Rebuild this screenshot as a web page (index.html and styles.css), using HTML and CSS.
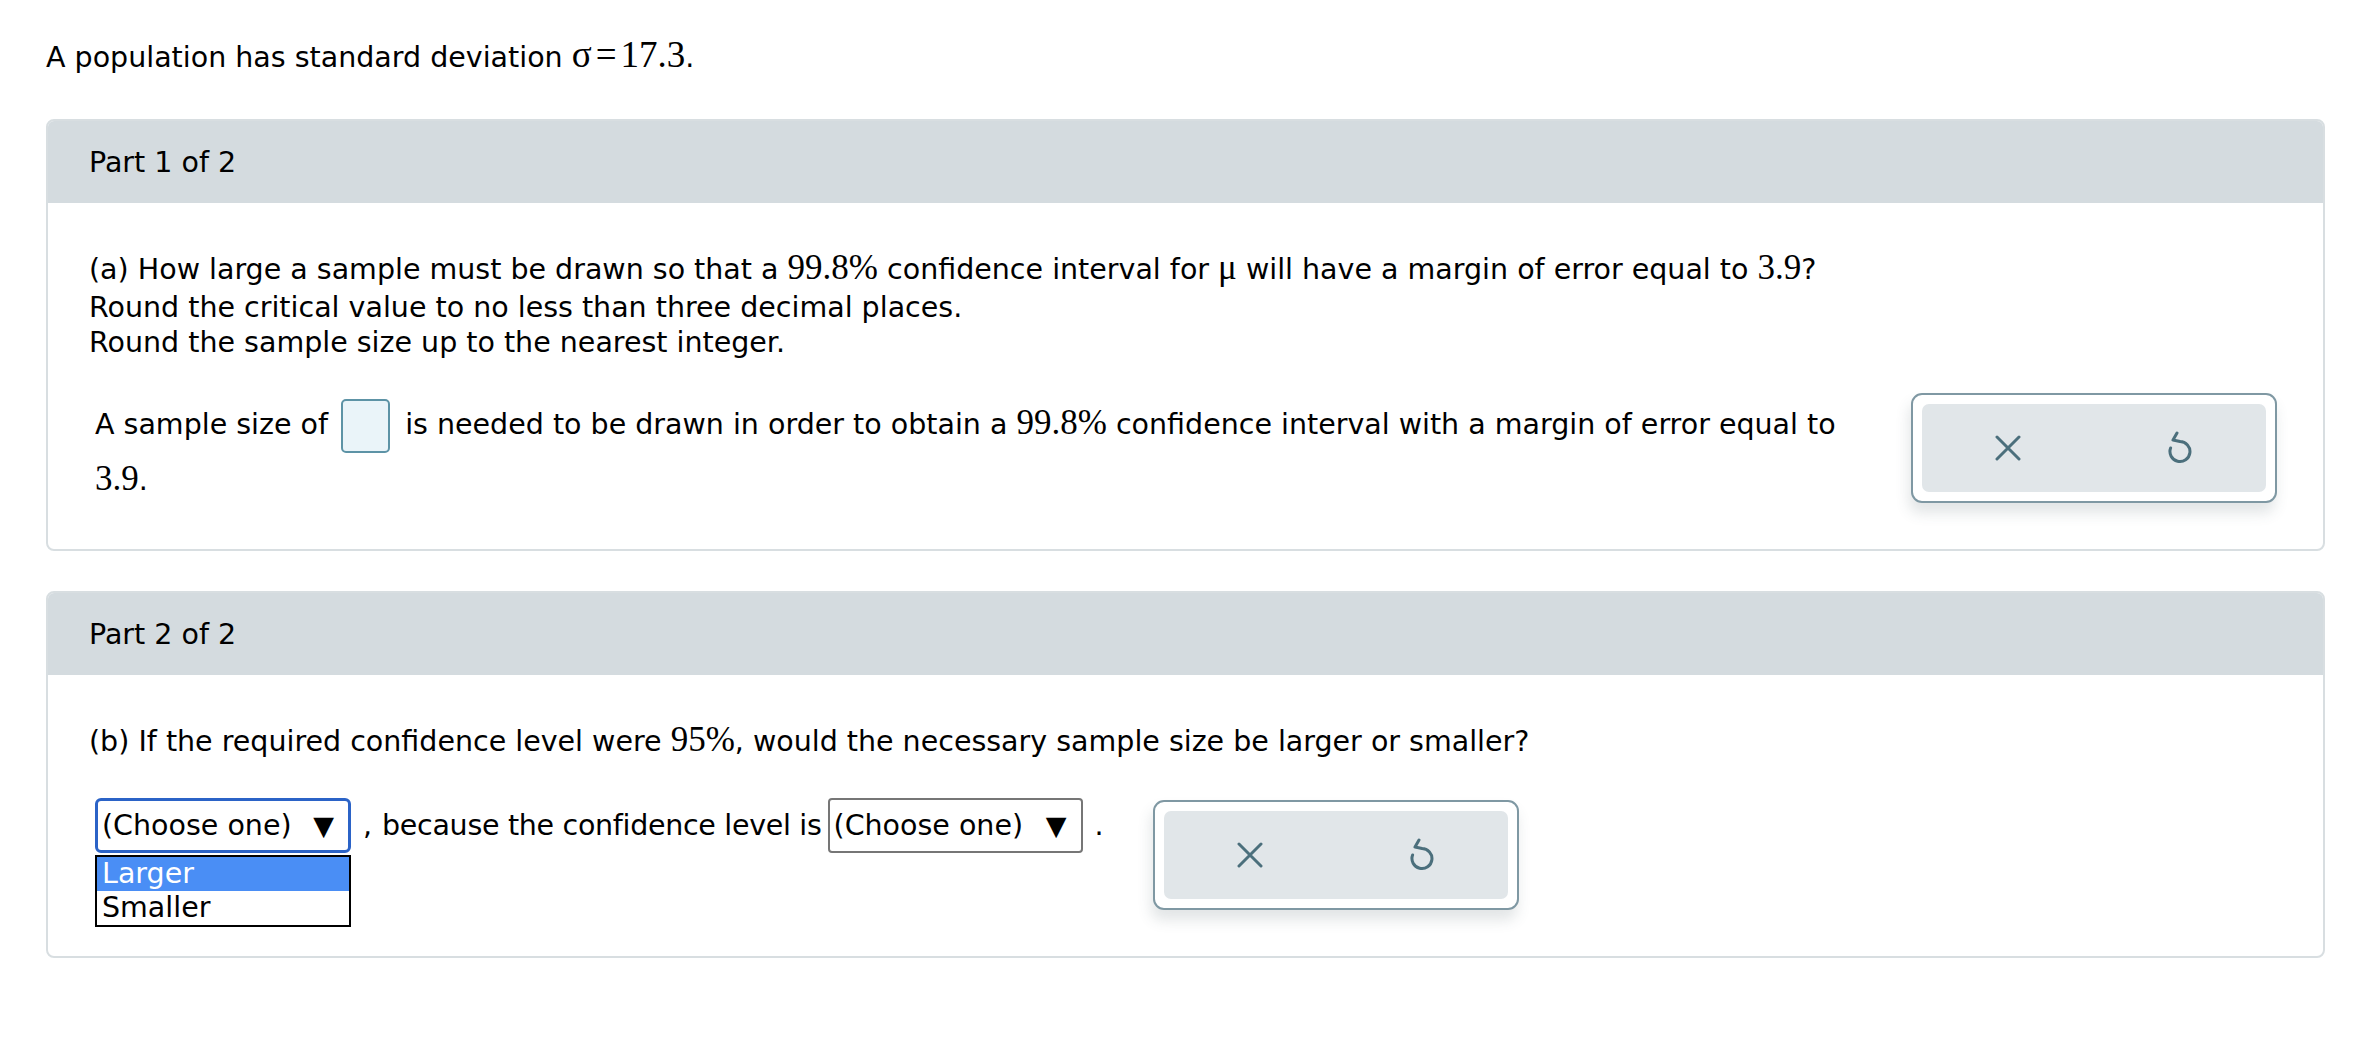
FILE: index.html
```html
<!DOCTYPE html>
<html lang="en">
<head>
<meta charset="utf-8">
<title>Sample size</title>
<link rel="stylesheet" href="styles.css">
</head>
<body>
<div class="page">
  <p class="intro">A population has standard deviation <span class="m">σ</span><span class="m eq">=</span><span class="m">17.3</span>.</p>

  <section class="card">
    <div class="card-head">Part 1 of 2</div>
    <div class="card-body">
      <div class="question">
        <p class="first">(a) How large a sample must be drawn so that a <span class="m">99.8%</span> confidence interval for <span class="m">μ</span> will have a margin of error equal to <span class="m">3.9</span>?</p>
        <p>Round the critical value to no less than three decimal places.</p>
        <p>Round the sample size up to the nearest integer.</p>
      </div>
      <div class="answer-row one">
        <p class="answer-text">A sample size of <span class="field"></span> is needed to be drawn in order to obtain a <span class="m">99.8%</span> confidence interval with a margin of error equal to <span class="m">3.9</span>.</p>
        <div class="tools">
          <div class="tools-inner">
            <button class="tool" aria-label="Clear">
              <svg width="26" height="26" viewBox="0 0 26 26"><path d="M2 2 L24 24 M24 2 L2 24" fill="none" stroke="#4b6f7c" stroke-width="3" stroke-linecap="round"/></svg>
            </button>
            <button class="tool" aria-label="Undo">
              <svg width="28" height="34" viewBox="0 0 28 34"><path d="M11 2 L7 9 L14 10.5 M14 10.5 A10 10 0 1 1 4.6 17" fill="none" stroke="#4b6f7c" stroke-width="3" stroke-linecap="round" stroke-linejoin="round"/></svg>
            </button>
          </div>
        </div>
      </div>
    </div>
  </section>

  <section class="card">
    <div class="card-head">Part 2 of 2</div>
    <div class="card-body">
      <div class="question">
        <p>(b) If the required confidence level were <span class="m">95%</span>, would the necessary sample size be larger or smaller?</p>
      </div>
      <div class="answer-row two">
        <div class="select-line">
          <div class="dd">
            <div class="select focus">(Choose one)<span class="caret">▼</span></div>
            <ul class="dd-list">
              <li class="hl">Larger</li>
              <li>Smaller</li>
            </ul>
          </div>
          <span class="comma">,</span>
          <span class="because">because the confidence level is</span>
          <div class="select plain">(Choose one)<span class="caret">▼</span></div>
          <span class="dot">.</span>
        </div>
        <div class="tools">
          <div class="tools-inner">
            <button class="tool" aria-label="Clear">
              <svg width="26" height="26" viewBox="0 0 26 26"><path d="M2 2 L24 24 M24 2 L2 24" fill="none" stroke="#4b6f7c" stroke-width="3" stroke-linecap="round"/></svg>
            </button>
            <button class="tool" aria-label="Undo">
              <svg width="28" height="34" viewBox="0 0 28 34"><path d="M11 2 L7 9 L14 10.5 M14 10.5 A10 10 0 1 1 4.6 17" fill="none" stroke="#4b6f7c" stroke-width="3" stroke-linecap="round" stroke-linejoin="round"/></svg>
            </button>
          </div>
        </div>
      </div>
    </div>
  </section>
</div>
</body>
</html>
```

FILE: styles.css
```css
* { box-sizing: border-box; }
html, body { margin: 0; padding: 0; background: #fff; }
body {
  font-family: "DejaVu Sans", Verdana, sans-serif;
  font-size: 28.5px;
  color: #000;
}
p { margin: 0; }
.page {
  padding: 39px 35px 40px 46px;
}
.intro {
  line-height: 38px;
  height: 38px;
  margin-bottom: 42px;
}
.m {
  font-family: "Liberation Serif", "Times New Roman", serif;
  font-size: 35px;
  line-height: 1;
}
.intro .m { font-size: 37px; line-height: 0; }
.eq { margin: 0 4px 0 4px; }

.card {
  border: 2px solid #d8dee1;
  border-radius: 8px;
  overflow: hidden;
  margin-bottom: 40px;
}
.card-head {
  background: #d4dbdf;
  height: 82px;
  display: flex;
  align-items: center;
  padding-left: 41px;
}
.card-body {
  padding: 47px 46px 46px 41px;
}
.question p { line-height: 35px; }
.question p.first { padding-bottom: 3px; }

.answer-row {
  display: flex;
  align-items: flex-start;
  justify-content: space-between;
}
.answer-row.one { margin-top: 33px; }
.answer-row.two { margin-top: 38px; justify-content: flex-start; }

.answer-text {
  padding-left: 6px;
  margin: 4px 0 -6px;
  line-height: 56px;
  width: 1776px;
}
.field {
  display: inline-block;
  width: 49px;
  height: 54px;
  vertical-align: middle;
  border: 2px solid #5d93a6;
  border-radius: 5px;
  background: #eaf4f9;
  margin: 0 6px 0 4px;
}

.tools {
  width: 366px;
  height: 110px;
  flex: none;
  border: 2px solid #7f98a3;
  border-radius: 11px;
  background: #fff;
  padding: 9px;
  box-shadow: -2px 10px 14px rgba(60, 80, 90, 0.15);
}
.tools-inner {
  height: 100%;
  background: #e1e6e9;
  border-radius: 7px;
  display: flex;
}
.tool {
  flex: 1;
  border: 0;
  background: transparent;
  display: flex;
  align-items: center;
  justify-content: center;
  padding: 0;
}

.select-line {
  display: flex;
  align-items: center;
  padding-left: 6px;
  white-space: nowrap;
  margin-top: 1px;
}
.dd { position: relative; }
.select {
  height: 55px;
  width: 256px;
  display: flex;
  align-items: center;
  justify-content: space-between;
  padding: 0 14px 0 4px;
  background: #fff;
}
.select.focus {
  border: 3px solid #2b63c7;
  border-radius: 6px;
}
.select.plain {
  border: 2px solid #767676;
  border-radius: 4px;
  margin-left: 6px;
  width: 255px;
  padding-left: 4px;
}
.because { letter-spacing: -0.3px; }
.caret { font-size: 27px; }
.comma { margin: 0 10px 0 12px; }
.dot { margin-left: 12px; }

.dd-list {
  position: absolute;
  left: 0;
  top: 57px;
  width: 256px;
  margin: 0;
  padding: 0;
  list-style: none;
  border: 2px solid #000;
  background: #fff;
}
.dd-list li {
  height: 34px;
  line-height: 34px;
  padding-left: 5px;
}
.dd-list li.hl {
  background: #4a8ef5;
  color: #fff;
}
.two .tools { margin-left: 49px; margin-top: 3px; }
```
